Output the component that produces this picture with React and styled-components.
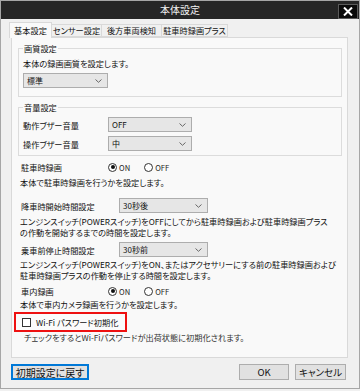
import React from "react";
import styled, { createGlobalStyle } from "styled-components";

const GlobalStyle = createGlobalStyle`
  html, body {
    margin: 0;
    padding: 0;
    background: #f0f0f0;
  }
  body {
    font-family: "Noto Sans CJK JP", "Noto Sans", sans-serif;
    font-feature-settings: "palt";
    color: #111;
  }
  * {
    box-sizing: border-box;
  }
`;

const Window = styled.div`
  width: 360px;
  height: 389px;
  border: 1px solid #a6a6a6;
  background: #f0f0f0;
  display: flex;
  flex-direction: column;
`;

const TitleBar = styled.div`
  height: 18px;
  background: #262626;
  display: grid;
  grid-template-columns: 1fr auto 1fr;
  align-items: center;
`;

const Title = styled.div`
  grid-column: 2;
  color: #f2f2f2;
  font-size: 10px;
  line-height: 18px;
`;

const CloseButton = styled.div`
  grid-column: 3;
  justify-self: end;
  align-self: end;
  width: 20px;
  height: 15px;
  margin-right: 1px;
  background: #0a0a0a;
  border: 1px solid #5a5a5a;
  display: flex;
  align-items: center;
  justify-content: center;
`;

const TabRow = styled.div`
  height: 18px;
  padding-left: 9px;
  display: flex;
  align-items: flex-end;
  position: relative;
  z-index: 1;
`;

const Tab = styled.div`
  width: ${(p) => p.$w}px;
  height: ${(p) => (p.$active ? 16 : 13)}px;
  margin-bottom: ${(p) => (p.$active ? -1 : 0)}px;
  background: ${(p) => (p.$active ? "#f9f9f9" : "#f0f0f0")};
  border: 1px solid #d9d9d9;
  border-bottom: ${(p) => (p.$active ? "none" : "1px solid #d9d9d9")};
  margin-left: -1px;
  font-size: 8.2px;
  line-height: ${(p) => (p.$active ? 14 : 11)}px;
  text-align: center;
  white-space: nowrap;
`;

const Panel = styled.div`
  height: 321px;
  margin: 0 11px 0 10px;
  border: 1px solid #d9d9d9;
  background: #f9f9f9;
  padding: 0 5px 0 6px;
  display: flex;
  flex-direction: column;
`;

const Group = styled.fieldset`
  margin: ${(p) => p.$top}px 0 0 0;
  padding: 0 4px ${(p) => p.$bottom}px 4px;
  border: 1px solid #dcdcdc;
  min-width: 0;
`;

const Legend = styled.legend`
  padding: 0 1px;
  font-size: 8.2px;
  line-height: 10px;
`;

const Text = styled.div`
  font-size: 8.2px;
  line-height: ${(p) => p.$lh || 12}px;
  margin-top: ${(p) => p.$top || 0}px;
  margin-left: ${(p) => p.$left || 0}px;
  white-space: nowrap;
  color: ${(p) => p.$color || "#111"};
`;

const Row = styled.div`
  display: flex;
  align-items: center;
  height: ${(p) => p.$h || 15}px;
  margin-top: ${(p) => p.$top || 0}px;
  margin-left: ${(p) => p.$left || 0}px;
`;

const Label = styled.div`
  width: ${(p) => p.$w}px;
  font-size: 8.2px;
  white-space: nowrap;
`;

const SelectBox = styled.div`
  width: ${(p) => p.$w}px;
  height: 15px;
  margin-top: ${(p) => p.$top || 0}px;
  background: #e6e6e6;
  border: 1px solid #adadad;
  padding: 0 5px 0 3px;
  display: flex;
  align-items: center;
  justify-content: space-between;
  font-size: 8px;
`;

const RadioItem = styled.div`
  display: flex;
  align-items: center;
  gap: 2px;
  margin-right: ${(p) => p.$gap || 0}px;
  font-size: 7.6px;
  color: #222;
`;

const RadioCircle = styled.span`
  width: 9px;
  height: 9px;
  border-radius: 50%;
  border: 1px solid #333;
  background: #fff;
  display: flex;
  align-items: center;
  justify-content: center;

  &::after {
    content: "";
    width: 4px;
    height: 4px;
    border-radius: 50%;
    background: ${(p) => (p.$checked ? "#111" : "transparent")};
  }
`;

const HighlightBox = styled.div`
  width: 113px;
  height: 20px;
  margin: 2px 0 0 -4px;
  border: 2px solid #ee1111;
  background: #fbfbfb;
  padding-left: 6px;
  display: flex;
  align-items: center;
  gap: 5px;
  font-size: 8.2px;
`;

const CheckBox = styled.span`
  width: 9px;
  height: 9px;
  border: 1px solid #333;
  background: #fff;
`;

const Footer = styled.div`
  height: 16px;
  margin-top: 6px;
  padding: 0 13px 0 10px;
  display: flex;
  align-items: center;
`;

const Button = styled.div`
  width: ${(p) => p.$w}px;
  height: 16px;
  margin-left: ${(p) => p.$ml || 0}px;
  background: #e1e1e1;
  border: ${(p) => (p.$focus ? "2px solid #0078d7" : "1px solid #adadad")};
  font-size: ${(p) => p.$fs || 9.5}px;
  display: flex;
  align-items: center;
  justify-content: center;
  white-space: nowrap;
`;

const Spacer = styled.div`
  flex: 1;
`;

const Chevron = () => (
  <svg width="7" height="4" viewBox="0 0 7 4">
    <path d="M0.5 0.5 L3.5 3.3 L6.5 0.5" fill="none" stroke="#666" strokeWidth="1" />
  </svg>
);

const Select = ({ value, w, top }) => (
  <SelectBox $w={w} $top={top}>
    <span>{value}</span>
    <Chevron />
  </SelectBox>
);

const Radio = ({ onChecked }) => (
  <>
    <RadioItem $gap={14}>
      <RadioCircle $checked={onChecked} />
      ON
    </RadioItem>
    <RadioItem>
      <RadioCircle $checked={!onChecked} />
      OFF
    </RadioItem>
  </>
);

const tabs = [
  { label: "基本設定", w: 43, active: true },
  { label: "センサー設定", w: 51 },
  { label: "後方車両検知", w: 61 },
  { label: "駐車時録画プラス", w: 67 },
];

export default function App() {
  return (
    <>
      <GlobalStyle />
      <Window>
        <TitleBar>
          <Title>本体設定</Title>
          <CloseButton>
            <svg width="10" height="9" viewBox="0 0 10 9">
              <path d="M1 0.5 L9 8.5 M9 0.5 L1 8.5" stroke="#fff" strokeWidth="2" />
            </svg>
          </CloseButton>
        </TitleBar>

        <TabRow>
          {tabs.map((t) => (
            <Tab key={t.label} $w={t.w} $active={t.active}>
              {t.label}
            </Tab>
          ))}
        </TabRow>

        <Panel>
          <Group $top={5} $bottom={8}>
            <Legend>画質設定</Legend>
            <Text $top={4}>本体の録画画質を設定します。</Text>
            <Select value="標準" w={85} top={4} />
          </Group>

          <Group $top={5} $bottom={4}>
            <Legend>音量設定</Legend>
            <Row $top={5}>
              <Label $w={85}>動作ブザー音量</Label>
              <Select value="OFF" w={84} />
            </Row>
            <Row $top={4}>
              <Label $w={85}>操作ブザー音量</Label>
              <Select value="中" w={84} />
            </Row>
          </Group>

          <Row $h={12} $top={5} $left={3}>
            <Label $w={87}>駐車時録画</Label>
            <Radio onChecked />
          </Row>
          <Text $top={3} $left={2}>本体で駐車時録画を行うかを設定します。</Text>

          <Row $top={10} $left={3}>
            <Label $w={98}>降車時開始時間設定</Label>
            <Select value="30秒後" w={89} />
          </Row>
          <Text $lh={11} $top={3} $left={2}>
            エンジンスイッチ(POWERスイッチ)をOFFにしてから駐車時録画および駐車時録画プラス
            <br />
            の作動を開始するまでの時間を設定します。
          </Text>

          <Row $top={4} $left={3}>
            <Label $w={98}>乗車前停止時間設定</Label>
            <Select value="30秒前" w={89} />
          </Row>
          <Text $lh={11} $top={2} $left={2}>
            エンジンスイッチ(POWERスイッチ)をON、またはアクセサリーにする前の駐車時録画および
            <br />
            駐車時録画プラスの作動を停止する時間を設定します。
          </Text>

          <Row $h={12} $top={4} $left={3}>
            <Label $w={87}>車内録画</Label>
            <Radio onChecked />
          </Row>
          <Text $top={1} $left={2}>本体で車内カメラ録画を行うかを設定します。</Text>

          <HighlightBox>
            <CheckBox />
            Wi-Fi パスワード初期化
          </HighlightBox>
          <Text $lh={11} $left={6} $color="#333">
            チェックをするとWi-Fiパスワードが出荷状態に初期化されます。
          </Text>
        </Panel>

        <Footer>
          <Button $w={78} $focus $fs={10}>
            初期設定に戻す
          </Button>
          <Spacer />
          <Button $w={50}>OK</Button>
          <Button $w={51} $ml={6}>
            キャンセル
          </Button>
        </Footer>
      </Window>
    </>
  );
}
